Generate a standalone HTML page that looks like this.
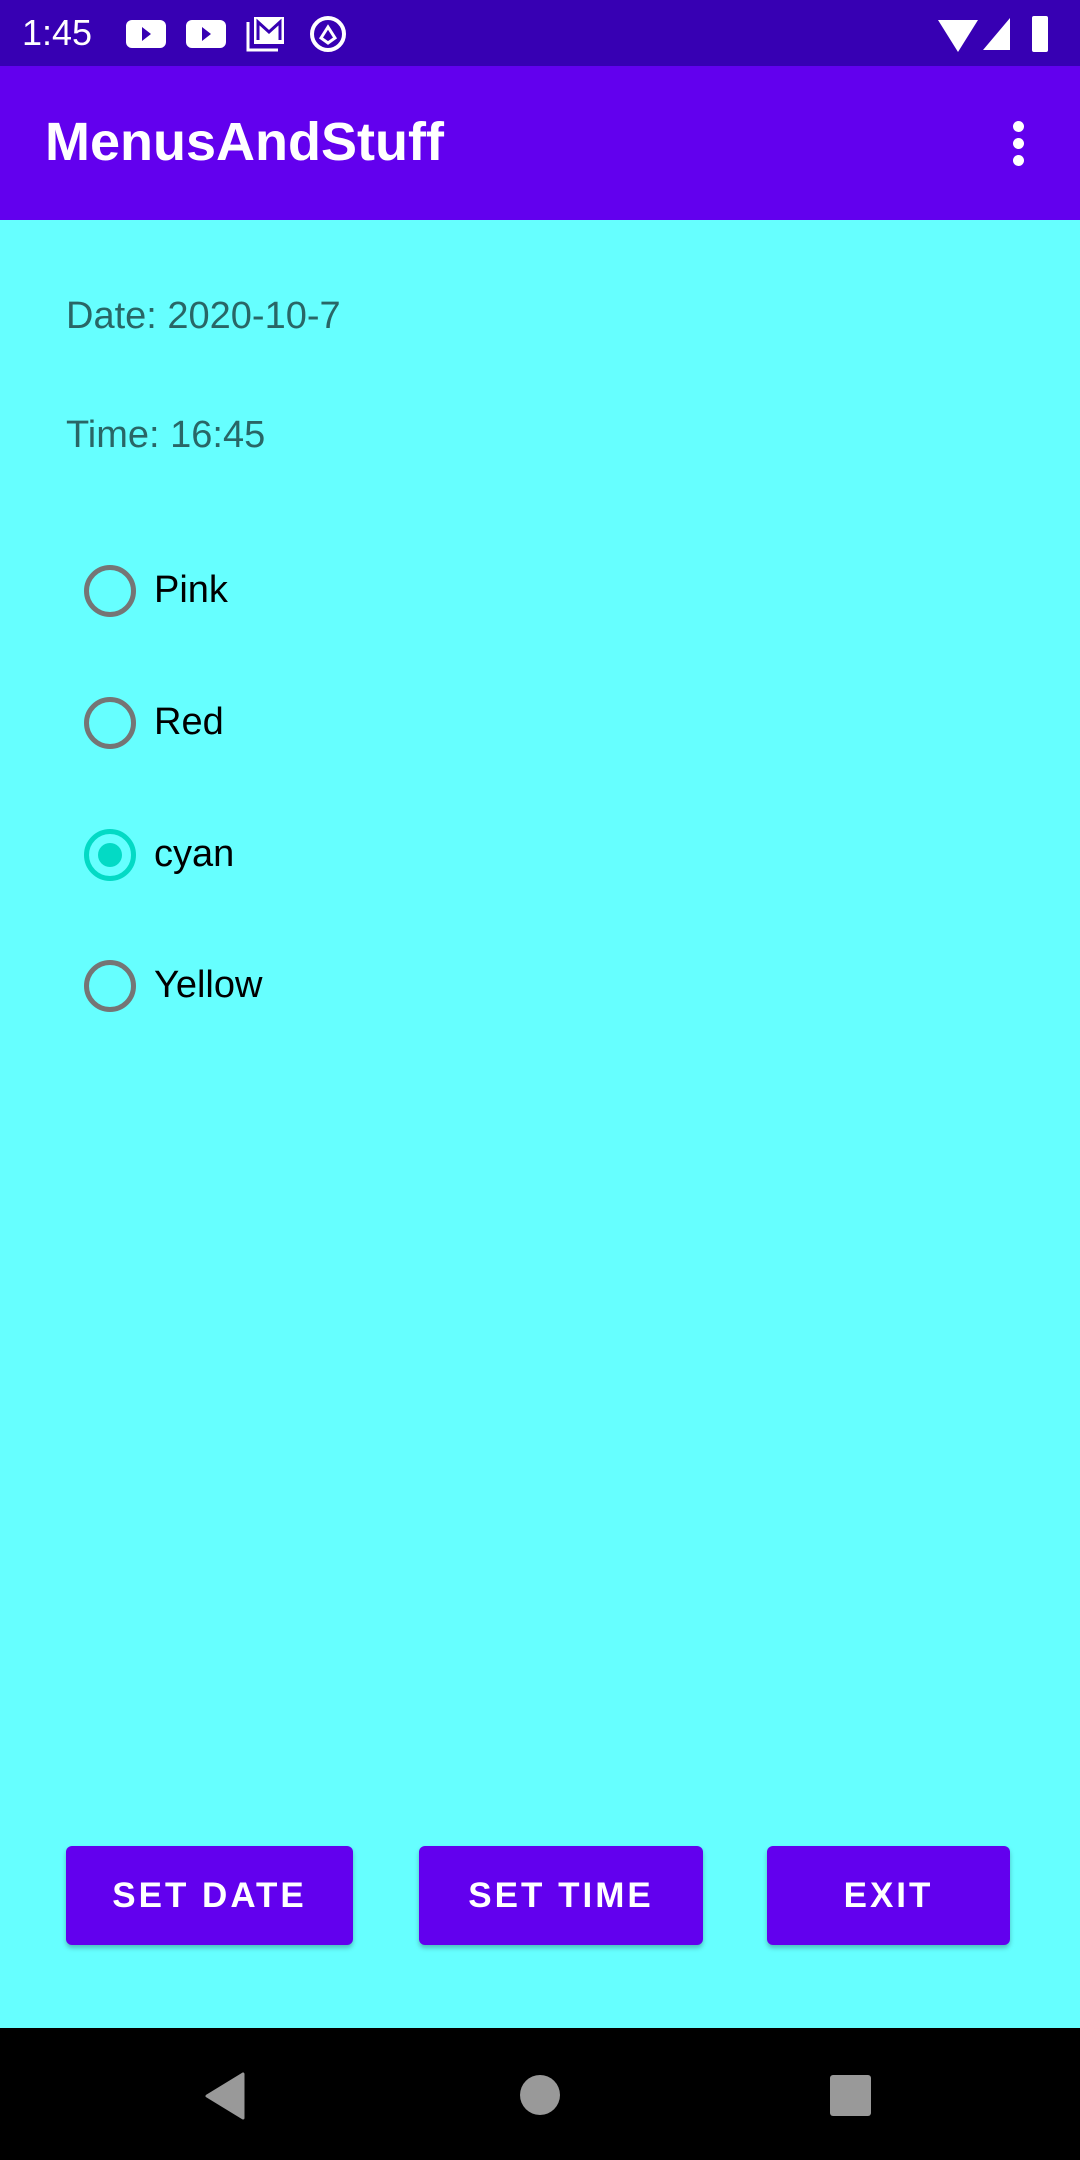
<!DOCTYPE html>
<html><head><style>
body{margin:0;width:1080px;height:2160px;position:relative;background:#66FFFF;font-family:"Liberation Sans",sans-serif;overflow:hidden}
.a{position:absolute}
.sb{left:0;top:0;width:1080px;height:66px;background:#3700B3}
.ab{left:0;top:66px;width:1080px;height:154px;background:#6200EE}
.t{color:rgba(0,0,0,.6);font-size:38px;left:66px}
.r{left:84px;width:52px;height:52px;border:5px solid #757575;border-radius:50%;box-sizing:border-box}
.l{left:154px;font-size:38px;color:#000}
.b{background:#6200EE;border-radius:6px;color:#fff;font-size:35px;font-weight:bold;letter-spacing:3px;display:flex;align-items:center;justify-content:center;top:1846px;height:99px;box-shadow:0 3px 5px rgba(0,0,0,.25)}
</style></head><body>
<div class="a sb"></div>
<div class="a" style="left:22px;top:12px;color:#fff;font-size:36px">1:45</div>
<svg class="a" style="left:124px;top:14px" width="230" height="40" viewBox="0 0 230 40">
<rect x="2" y="6" width="40" height="28" rx="6" fill="#fff"/><path d="M18 13l9 7-9 7z" fill="#3700B3"/>
<rect x="62" y="6" width="40" height="28" rx="6" fill="#fff"/><path d="M78 13l9 7-9 7z" fill="#3700B3"/>
<path d="M124 8v28h30" stroke="#fff" stroke-width="3" fill="none"/><rect x="130" y="3" width="30" height="27" fill="#fff"/><path d="M134 26V8l11 10 11-10v18" stroke="#3700B3" stroke-width="3" fill="none"/>
<circle cx="204" cy="20" r="16" stroke="#fff" stroke-width="4" fill="none"/><path d="M197 24l7-11 7 11-7 5z" stroke="#fff" stroke-width="3" fill="none"/>
</svg>
<svg class="a" style="left:930px;top:14px" width="130" height="40" viewBox="0 0 130 40">
<path d="M8 6h40l-20 32z" fill="#fff"/><path d="M53 36L80 4v32z" fill="#fff"/><rect x="102" y="2" width="16" height="36" rx="2" fill="#fff"/>
</svg>
<div class="a ab"></div>
<div class="a" style="left:45px;top:112px;color:#fff;font-size:54px;font-weight:bold;line-height:60px">MenusAndStuff</div>
<div class="a" style="left:1013px;top:121px;width:11px;height:11px;border-radius:50%;background:#fff;box-shadow:0 17px 0 #fff,0 34px 0 #fff"></div>
<div class="a t" style="top:295px">Date: 2020-10-7</div>
<div class="a t" style="top:414px">Time: 16:45</div>
<div class="a r" style="top:565px"></div><div class="a l" style="top:569px">Pink</div>
<div class="a r" style="top:697px"></div><div class="a l" style="top:701px">Red</div>
<div class="a r" style="top:829px;border-color:#03DAC5"><div style="position:absolute;left:9px;top:9px;width:24px;height:24px;border-radius:50%;background:#03DAC5"></div></div><div class="a l" style="top:833px">cyan</div>
<div class="a r" style="top:960px"></div><div class="a l" style="top:964px">Yellow</div>
<div class="a b" style="left:66px;width:287px">SET DATE</div>
<div class="a b" style="left:419px;width:284px">SET TIME</div>
<div class="a b" style="left:767px;width:243px">EXIT</div>
<div class="a" style="left:0;top:2028px;width:1080px;height:132px;background:#000"></div>
<svg class="a" style="left:0;top:2028px" width="1080" height="132">
<path d="M243 46v44l-36-22z" fill="#999" stroke="#999" stroke-width="3" stroke-linejoin="round"/>
<circle cx="540" cy="67" r="20" fill="#999"/>
<rect x="830" y="47" width="41" height="41" rx="3" fill="#999"/>
</svg>
</body></html>
